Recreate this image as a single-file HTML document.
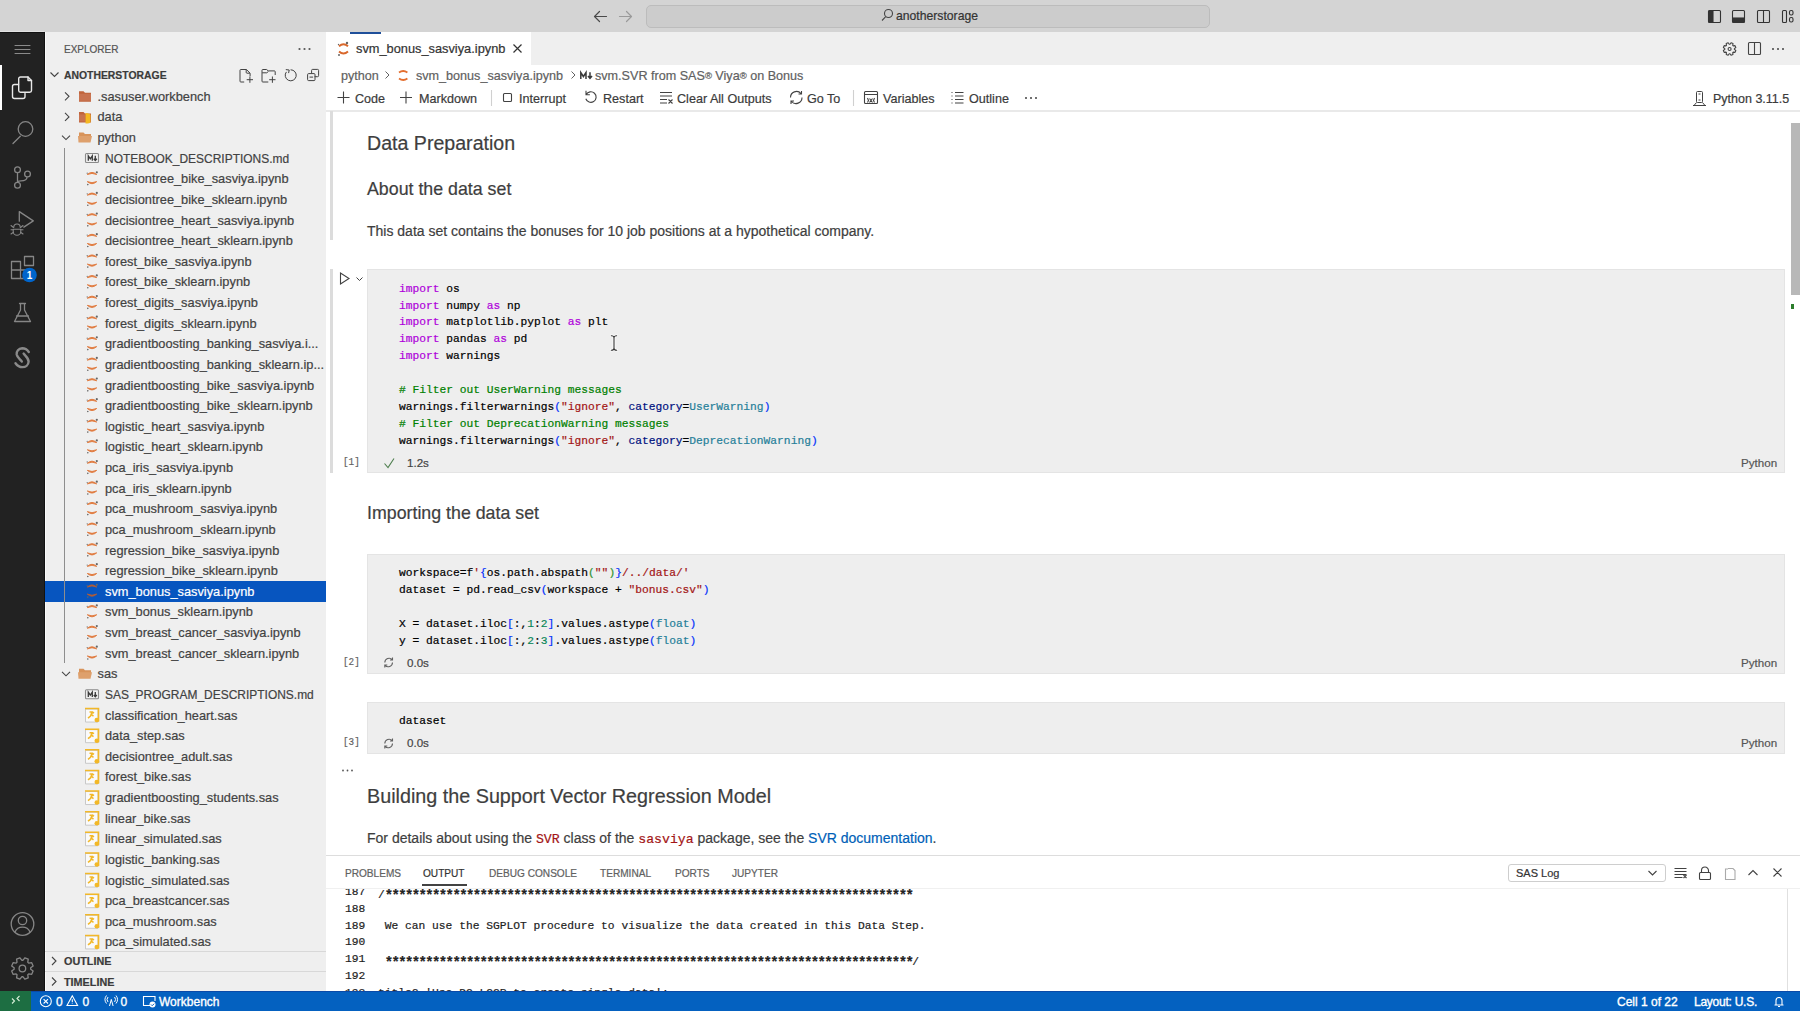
<!DOCTYPE html><html><head><meta charset="utf-8"><style>
*{margin:0;padding:0;box-sizing:border-box}
html,body{width:1800px;height:1011px;overflow:hidden;background:#fff}
body{position:relative;font-family:"Liberation Sans",sans-serif;color:#3b3b3b}
.t{-webkit-text-stroke:0.2px currentColor}
.a{position:absolute}
.t{position:absolute;white-space:pre;line-height:1}
svg{position:absolute;overflow:visible}
.mono{font-family:"Liberation Mono",monospace}
.ast{font-size:14px;letter-spacing:-1.64px;font-weight:bold;position:relative;top:2px}
</style></head><body><div class="a" style="left:0;top:0;width:1800px;height:32px;background:#d4d4d4"></div>
<svg style="left:0;top:0" width="1800" height="32"><g fill="none" stroke-linecap="round" stroke-linejoin="round"><path d="M594.5 16.5h12M599.5 11.5l-5 5 5 5" stroke="#4a4a4a" stroke-width="1.2"/><path d="M619.5 16.5h12M626.5 11.5l5 5-5 5" stroke="#9a9a9a" stroke-width="1.2"/></g></svg>
<div class="a" style="left:645.5px;top:4.5px;width:564px;height:23px;border:1px solid #bcbcbc;border-radius:5px;background:#cccccc"></div>
<svg style="left:0;top:0" width="1800" height="32"><g fill="none" stroke="#444" stroke-width="1.1"><circle cx="888.5" cy="13.5" r="4"/><path d="M885.5 16.8l-3.5 3.7"/></g></svg>
<div class="t" style="left:896px;top:10px;font-size:12.2px;color:#333">anotherstorage</div>
<svg style="left:0;top:0" width="1800" height="32"><g fill="none" stroke="#333" stroke-width="1.1"><rect x="1708.5" y="10.5" width="12" height="12" rx="1"/><rect x="1709" y="11" width="4" height="11" fill="#333"/><rect x="1732.5" y="10.5" width="12" height="12" rx="1"/><rect x="1733" y="18" width="11" height="4" fill="#333"/><rect x="1757.5" y="10.5" width="12" height="12" rx="1"/><path d="M1763.5 10.5v12"/><rect x="1782.5" y="10.5" width="4" height="12" rx="1"/><rect x="1789.5" y="10.5" width="3.5" height="4.5" rx="1.5"/><rect x="1789.5" y="17.5" width="3.5" height="4.5" rx="1.5"/></g></svg>
<div class="a" style="left:0;top:31px;width:44px;height:1px;background:#e2e2e2"></div>
<div class="a" style="left:0;top:32px;width:45px;height:959px;background:#222222;border-right:1.5px solid #121212;border-top:1px solid #111"></div>
<div class="a" style="left:0;top:65px;width:2px;height:45px;background:#ffffff"></div>
<svg style="left:0;top:0" width="45" height="1011"><g fill="none" stroke="#868686" stroke-width="1.3" stroke-linejoin="round" stroke-linecap="round"><path d="M15 45.5h15M15 49.5h15M15 53.5h15" stroke="#8a8a8a" stroke-width="1.1"/><g stroke="#e8e8e8" stroke-width="1.4"><path d="M18.5 84.5h-4a2 2 0 0 0-2 2v10a2 2 0 0 0 2 2h8.5a2 2 0 0 0 2-2v-3"/><path d="M20.5 77h7.5l3.5 3.5v10a1.8 1.8 0 0 1-1.8 1.8h-9.2a1.8 1.8 0 0 1-1.8-1.8v-11.7a1.8 1.8 0 0 1 1.8-1.8z"/><path d="M28 77v3.5h3.5"/></g><circle cx="25.5" cy="129" r="7.3"/><path d="M13 143.5l7.3-7.3"/><circle cx="17.5" cy="169.8" r="2.9"/><circle cx="27.5" cy="174" r="2.9"/><circle cx="17.5" cy="185.3" r="2.9"/><path d="M17.5 173v9.2M27 177.3c0 3-3 3.5-6 3.5-2 0-3.5.8-3.5 1.5"/><path d="M19.3 221.2v-9.6l14 9.3-9.5 6.2"/><path d="M13.8 227.2a3.2 3.2 0 0 1 6.4 0M13.2 229.3h7.6v2.2a3.8 3.8 0 0 1-7.6 0z" stroke-width="1.1"/><path d="M11 225.5l2.5 2M23 225.5l-2.5 2M11 229.8h2.2M23 229.8h-2.2M11 234l2.5-1.8M23 234l-2.5-1.8" stroke-width="1.1"/><path d="M11.5 261.5h9v17h-9zM11.5 270h17.5v8.5h-8.5M24.5 256.5h9v9h-9z"/><path d="M19.5 303.5h6M20.5 303.5v6.5l-6 11.5h16l-6-11.5v-6.5M16.5 316h12"/><circle cx="22.5" cy="924" r="11.3"/><circle cx="22.5" cy="920.5" r="4.2"/><path d="M15 932c1.5-3.5 4.3-4.8 7.5-4.8s6 1.3 7.5 4.8"/></g><circle cx="29.5" cy="275" r="7.3" fill="#0065cc"/><text x="29.5" y="279" font-family="Liberation Sans" font-size="10" font-weight="bold" fill="#fff" text-anchor="middle">1</text><path d="M28.8 352C27 349.3 24.5 348.3 22.2 348.3 18.5 348.5 16.3 351.3 16.7 354.5 17.2 357.5 20 359.3 21.8 361.5" fill="none" stroke="#8a8a8a" stroke-width="2.4" stroke-linecap="round"/><path d="M23.6 353.6C25.6 356.2 28.6 358 28.6 361.7 28.4 365.2 25.4 367.1 22.5 367.1 19.6 367.1 17.2 365.6 15.5 363.2" fill="none" stroke="#8a8a8a" stroke-width="2.4" stroke-linecap="round"/><g fill="none" stroke="#868686" stroke-width="1.3" stroke-linejoin="round"><circle cx="22.4" cy="968.5" r="3.3"/><path d="M30.67 969.15 L33.12 970.98 L31.73 974.32 L28.71 973.89 L27.79 974.81 L28.22 977.83 L24.88 979.22 L23.05 976.77 L21.75 976.77 L19.92 979.22 L16.58 977.83 L17.01 974.81 L16.09 973.89 L13.07 974.32 L11.68 970.98 L14.13 969.15 L14.13 967.85 L11.68 966.02 L13.07 962.68 L16.09 963.11 L17.01 962.19 L16.58 959.17 L19.92 957.78 L21.75 960.23 L23.05 960.23 L24.88 957.78 L28.22 959.17 L27.79 962.19 L28.71 963.11 L31.73 962.68 L33.12 966.02 L30.67 967.85Z"/></g></svg>
<div class="a" style="left:45px;top:32px;width:281px;height:959px;background:#efefef;border-left:1px solid #fafafa"></div>
<div class="t" style="left:64px;top:44.5px;font-size:10px;color:#555">EXPLORER</div>
<svg style="left:0;top:0" width="330" height="1011"><g fill="#555"><circle cx="299.5" cy="49" r="1.1"/><circle cx="304.5" cy="49" r="1.1"/><circle cx="309.5" cy="49" r="1.1"/></g></svg>
<svg style="left:0;top:0" width="330" height="1011"><path d="M50.5 72.5l4 4 4-4" fill="none" stroke="#444" stroke-width="1.1"/></svg>
<div class="t" style="left:64px;top:71px;font-size:10.4px;font-weight:bold;color:#3b3b3b">ANOTHERSTORAGE</div>
<svg style="left:0;top:0" width="330" height="1011"><g fill="none" stroke="#424242" stroke-width="1"><path d="M244.2 82h-3.4a.8.8 0 0 1-.8-.8V70.3a.8.8 0 0 1 .8-.8h5.6l3.7 3.7v3"/><path d="M246.2 69.6v2.8a.8.8 0 0 0 .8.8h2.9"/><path d="M249.9 76.5v6.3M246.7 79.7h6.3"/><path d="M268.3 82h-5.5a.8.8 0 0 1-.8-.8V70.3a.8.8 0 0 1 .8-.8h3.8l1.6 1.4h6.2a.8.8 0 0 1 .8.8v3.3"/><path d="M262.2 72.8h4.6l1.5-1.3"/><path d="M272.4 76.5v6.3M269.2 79.7h6.3"/><path d="M290.6 69.8A5.5 5.5 0 1 1 286.4 71.9"/><path d="M285.8 69.6l3.4.4-.6 3.1"/><path d="M311.6 73.3v-2.9a1 1 0 0 1 1-1h5a1 1 0 0 1 1 1v5.3a1 1 0 0 1-1 1h-3"/><rect x="307.6" y="73.6" width="7.4" height="7" rx="1"/><path d="M309.5 77.1h3.6"/></g></svg>
<div class="t" style="left:97.5px;top:90.812px;font-size:12.8px;color:#424242">.sasuser.workbench</div>
<div class="t" style="left:97.5px;top:111.438px;font-size:12.8px;color:#424242">data</div>
<div class="t" style="left:97.5px;top:132.062px;font-size:12.8px;color:#424242">python</div>
<div class="t" style="left:105px;top:152.688px;font-size:12.8px;color:#424242;transform:scaleX(0.935);transform-origin:0 0">NOTEBOOK_DESCRIPTIONS.md</div>
<div class="t" style="left:105px;top:173.312px;font-size:12.8px;color:#424242">decisiontree_bike_sasviya.ipynb</div>
<div class="t" style="left:105px;top:193.938px;font-size:12.8px;color:#424242">decisiontree_bike_sklearn.ipynb</div>
<div class="t" style="left:105px;top:214.562px;font-size:12.8px;color:#424242">decisiontree_heart_sasviya.ipynb</div>
<div class="t" style="left:105px;top:235.188px;font-size:12.8px;color:#424242">decisiontree_heart_sklearn.ipynb</div>
<div class="t" style="left:105px;top:255.812px;font-size:12.8px;color:#424242">forest_bike_sasviya.ipynb</div>
<div class="t" style="left:105px;top:276.438px;font-size:12.8px;color:#424242">forest_bike_sklearn.ipynb</div>
<div class="t" style="left:105px;top:297.062px;font-size:12.8px;color:#424242">forest_digits_sasviya.ipynb</div>
<div class="t" style="left:105px;top:317.688px;font-size:12.8px;color:#424242">forest_digits_sklearn.ipynb</div>
<div class="t" style="left:105px;top:338.312px;font-size:12.8px;color:#424242">gradientboosting_banking_sasviya.i...</div>
<div class="t" style="left:105px;top:358.938px;font-size:12.8px;color:#424242">gradientboosting_banking_sklearn.ip...</div>
<div class="t" style="left:105px;top:379.562px;font-size:12.8px;color:#424242">gradientboosting_bike_sasviya.ipynb</div>
<div class="t" style="left:105px;top:400.188px;font-size:12.8px;color:#424242">gradientboosting_bike_sklearn.ipynb</div>
<div class="t" style="left:105px;top:420.812px;font-size:12.8px;color:#424242">logistic_heart_sasviya.ipynb</div>
<div class="t" style="left:105px;top:441.438px;font-size:12.8px;color:#424242">logistic_heart_sklearn.ipynb</div>
<div class="t" style="left:105px;top:462.062px;font-size:12.8px;color:#424242">pca_iris_sasviya.ipynb</div>
<div class="t" style="left:105px;top:482.688px;font-size:12.8px;color:#424242">pca_iris_sklearn.ipynb</div>
<div class="t" style="left:105px;top:503.312px;font-size:12.8px;color:#424242">pca_mushroom_sasviya.ipynb</div>
<div class="t" style="left:105px;top:523.938px;font-size:12.8px;color:#424242">pca_mushroom_sklearn.ipynb</div>
<div class="t" style="left:105px;top:544.562px;font-size:12.8px;color:#424242">regression_bike_sasviya.ipynb</div>
<div class="t" style="left:105px;top:565.188px;font-size:12.8px;color:#424242">regression_bike_sklearn.ipynb</div>
<div class="a" style="left:45px;top:581.000px;width:281px;height:20.625px;background:#0755bf"></div>
<div class="t" style="left:105px;top:585.812px;font-size:12.8px;color:#ffffff">svm_bonus_sasviya.ipynb</div>
<div class="t" style="left:105px;top:606.438px;font-size:12.8px;color:#424242">svm_bonus_sklearn.ipynb</div>
<div class="t" style="left:105px;top:627.062px;font-size:12.8px;color:#424242">svm_breast_cancer_sasviya.ipynb</div>
<div class="t" style="left:105px;top:647.688px;font-size:12.8px;color:#424242">svm_breast_cancer_sklearn.ipynb</div>
<div class="t" style="left:97.5px;top:668.312px;font-size:12.8px;color:#424242">sas</div>
<div class="t" style="left:105px;top:688.938px;font-size:12.8px;color:#424242;transform:scaleX(0.935);transform-origin:0 0">SAS_PROGRAM_DESCRIPTIONS.md</div>
<div class="t" style="left:105px;top:709.562px;font-size:12.8px;color:#424242">classification_heart.sas</div>
<div class="t" style="left:105px;top:730.188px;font-size:12.8px;color:#424242">data_step.sas</div>
<div class="t" style="left:105px;top:750.812px;font-size:12.8px;color:#424242">decisiontree_adult.sas</div>
<div class="t" style="left:105px;top:771.438px;font-size:12.8px;color:#424242">forest_bike.sas</div>
<div class="t" style="left:105px;top:792.062px;font-size:12.8px;color:#424242">gradientboosting_students.sas</div>
<div class="t" style="left:105px;top:812.688px;font-size:12.8px;color:#424242">linear_bike.sas</div>
<div class="t" style="left:105px;top:833.312px;font-size:12.8px;color:#424242">linear_simulated.sas</div>
<div class="t" style="left:105px;top:853.938px;font-size:12.8px;color:#424242">logistic_banking.sas</div>
<div class="t" style="left:105px;top:874.562px;font-size:12.8px;color:#424242">logistic_simulated.sas</div>
<div class="t" style="left:105px;top:895.188px;font-size:12.8px;color:#424242">pca_breastcancer.sas</div>
<div class="t" style="left:105px;top:915.812px;font-size:12.8px;color:#424242">pca_mushroom.sas</div>
<div class="t" style="left:105px;top:936.438px;font-size:12.8px;color:#424242">pca_simulated.sas</div>
<div class="a" style="left:64px;top:148px;width:1px;height:515px;background:#8e8e8e"></div>
<svg style="left:0;top:0" width="330" height="1011"><path d="M65 92.31l4 4-4 4" fill="none" stroke="#444" stroke-width="1.1"/><path d="M79 91.31h4.5l1.5 1.5h6v9h-12z" fill="#c0643c"/><path d="M79 93.81h12v7h-12z" fill="#c87350"/><path d="M65 112.94l4 4-4 4" fill="none" stroke="#444" stroke-width="1.1"/><path d="M79 111.94h4.5l1.5 1.5h6v9h-12z" fill="#c0643c"/><path d="M85.5 112.94c3 0 5 1 5 2v7c0 1-2 1.5-5 1.5z" fill="#f4b822"/><path d="M79 114.44h6v7h-6z" fill="#c87350"/><path d="M62 135.56l4 4 4-4" fill="none" stroke="#444" stroke-width="1.1"/><path d="M79 132.56h4.5l1.5 1.5h6v3h-12z" fill="#d8935a"/><path d="M78 136.06h14l-1.5 6.5h-12z" fill="#dea06c"/><rect x="85.5" y="153.49" width="13" height="9" rx="1" fill="none" stroke="#8a8a8a" stroke-width="1.1"/><path d="M88.3 160.79v-5l2 3 2-3v5M95.3 155.69v4.5M93.8 158.79l1.5 1.8 1.5-1.8" fill="none" stroke="#3a3a3a" stroke-width="1.3"/><path d="M87.3 174.51q4.7 -4.2 9.4 0q-4.7 -2.2 -9.4 0z" fill="#e0773a" stroke="#e0773a" stroke-width=".9"/><path d="M87.3 181.61q4.7 4.2 9.4 0q-4.7 2.2 -9.4 0z" fill="#e0773a" stroke="#e0773a" stroke-width=".9"/><circle cx="96.8" cy="172.31" r="1.1" fill="#666"/><circle cx="87.2" cy="173.21" r=".6" fill="#666"/><circle cx="87.8" cy="184.61" r=".8" fill="#666"/><path d="M87.3 195.14q4.7 -4.2 9.4 0q-4.7 -2.2 -9.4 0z" fill="#e0773a" stroke="#e0773a" stroke-width=".9"/><path d="M87.3 202.24q4.7 4.2 9.4 0q-4.7 2.2 -9.4 0z" fill="#e0773a" stroke="#e0773a" stroke-width=".9"/><circle cx="96.8" cy="192.94" r="1.1" fill="#666"/><circle cx="87.2" cy="193.84" r=".6" fill="#666"/><circle cx="87.8" cy="205.24" r=".8" fill="#666"/><path d="M87.3 215.76q4.7 -4.2 9.4 0q-4.7 -2.2 -9.4 0z" fill="#e0773a" stroke="#e0773a" stroke-width=".9"/><path d="M87.3 222.86q4.7 4.2 9.4 0q-4.7 2.2 -9.4 0z" fill="#e0773a" stroke="#e0773a" stroke-width=".9"/><circle cx="96.8" cy="213.56" r="1.1" fill="#666"/><circle cx="87.2" cy="214.46" r=".6" fill="#666"/><circle cx="87.8" cy="225.86" r=".8" fill="#666"/><path d="M87.3 236.39q4.7 -4.2 9.4 0q-4.7 -2.2 -9.4 0z" fill="#e0773a" stroke="#e0773a" stroke-width=".9"/><path d="M87.3 243.49q4.7 4.2 9.4 0q-4.7 2.2 -9.4 0z" fill="#e0773a" stroke="#e0773a" stroke-width=".9"/><circle cx="96.8" cy="234.19" r="1.1" fill="#666"/><circle cx="87.2" cy="235.09" r=".6" fill="#666"/><circle cx="87.8" cy="246.49" r=".8" fill="#666"/><path d="M87.3 257.01q4.7 -4.2 9.4 0q-4.7 -2.2 -9.4 0z" fill="#e0773a" stroke="#e0773a" stroke-width=".9"/><path d="M87.3 264.11q4.7 4.2 9.4 0q-4.7 2.2 -9.4 0z" fill="#e0773a" stroke="#e0773a" stroke-width=".9"/><circle cx="96.8" cy="254.81" r="1.1" fill="#666"/><circle cx="87.2" cy="255.71" r=".6" fill="#666"/><circle cx="87.8" cy="267.11" r=".8" fill="#666"/><path d="M87.3 277.64q4.7 -4.2 9.4 0q-4.7 -2.2 -9.4 0z" fill="#e0773a" stroke="#e0773a" stroke-width=".9"/><path d="M87.3 284.74q4.7 4.2 9.4 0q-4.7 2.2 -9.4 0z" fill="#e0773a" stroke="#e0773a" stroke-width=".9"/><circle cx="96.8" cy="275.44" r="1.1" fill="#666"/><circle cx="87.2" cy="276.34" r=".6" fill="#666"/><circle cx="87.8" cy="287.74" r=".8" fill="#666"/><path d="M87.3 298.26q4.7 -4.2 9.4 0q-4.7 -2.2 -9.4 0z" fill="#e0773a" stroke="#e0773a" stroke-width=".9"/><path d="M87.3 305.36q4.7 4.2 9.4 0q-4.7 2.2 -9.4 0z" fill="#e0773a" stroke="#e0773a" stroke-width=".9"/><circle cx="96.8" cy="296.06" r="1.1" fill="#666"/><circle cx="87.2" cy="296.96" r=".6" fill="#666"/><circle cx="87.8" cy="308.36" r=".8" fill="#666"/><path d="M87.3 318.89q4.7 -4.2 9.4 0q-4.7 -2.2 -9.4 0z" fill="#e0773a" stroke="#e0773a" stroke-width=".9"/><path d="M87.3 325.99q4.7 4.2 9.4 0q-4.7 2.2 -9.4 0z" fill="#e0773a" stroke="#e0773a" stroke-width=".9"/><circle cx="96.8" cy="316.69" r="1.1" fill="#666"/><circle cx="87.2" cy="317.59" r=".6" fill="#666"/><circle cx="87.8" cy="328.99" r=".8" fill="#666"/><path d="M87.3 339.51q4.7 -4.2 9.4 0q-4.7 -2.2 -9.4 0z" fill="#e0773a" stroke="#e0773a" stroke-width=".9"/><path d="M87.3 346.61q4.7 4.2 9.4 0q-4.7 2.2 -9.4 0z" fill="#e0773a" stroke="#e0773a" stroke-width=".9"/><circle cx="96.8" cy="337.31" r="1.1" fill="#666"/><circle cx="87.2" cy="338.21" r=".6" fill="#666"/><circle cx="87.8" cy="349.61" r=".8" fill="#666"/><path d="M87.3 360.14q4.7 -4.2 9.4 0q-4.7 -2.2 -9.4 0z" fill="#e0773a" stroke="#e0773a" stroke-width=".9"/><path d="M87.3 367.24q4.7 4.2 9.4 0q-4.7 2.2 -9.4 0z" fill="#e0773a" stroke="#e0773a" stroke-width=".9"/><circle cx="96.8" cy="357.94" r="1.1" fill="#666"/><circle cx="87.2" cy="358.84" r=".6" fill="#666"/><circle cx="87.8" cy="370.24" r=".8" fill="#666"/><path d="M87.3 380.76q4.7 -4.2 9.4 0q-4.7 -2.2 -9.4 0z" fill="#e0773a" stroke="#e0773a" stroke-width=".9"/><path d="M87.3 387.86q4.7 4.2 9.4 0q-4.7 2.2 -9.4 0z" fill="#e0773a" stroke="#e0773a" stroke-width=".9"/><circle cx="96.8" cy="378.56" r="1.1" fill="#666"/><circle cx="87.2" cy="379.46" r=".6" fill="#666"/><circle cx="87.8" cy="390.86" r=".8" fill="#666"/><path d="M87.3 401.39q4.7 -4.2 9.4 0q-4.7 -2.2 -9.4 0z" fill="#e0773a" stroke="#e0773a" stroke-width=".9"/><path d="M87.3 408.49q4.7 4.2 9.4 0q-4.7 2.2 -9.4 0z" fill="#e0773a" stroke="#e0773a" stroke-width=".9"/><circle cx="96.8" cy="399.19" r="1.1" fill="#666"/><circle cx="87.2" cy="400.09" r=".6" fill="#666"/><circle cx="87.8" cy="411.49" r=".8" fill="#666"/><path d="M87.3 422.01q4.7 -4.2 9.4 0q-4.7 -2.2 -9.4 0z" fill="#e0773a" stroke="#e0773a" stroke-width=".9"/><path d="M87.3 429.11q4.7 4.2 9.4 0q-4.7 2.2 -9.4 0z" fill="#e0773a" stroke="#e0773a" stroke-width=".9"/><circle cx="96.8" cy="419.81" r="1.1" fill="#666"/><circle cx="87.2" cy="420.71" r=".6" fill="#666"/><circle cx="87.8" cy="432.11" r=".8" fill="#666"/><path d="M87.3 442.64q4.7 -4.2 9.4 0q-4.7 -2.2 -9.4 0z" fill="#e0773a" stroke="#e0773a" stroke-width=".9"/><path d="M87.3 449.74q4.7 4.2 9.4 0q-4.7 2.2 -9.4 0z" fill="#e0773a" stroke="#e0773a" stroke-width=".9"/><circle cx="96.8" cy="440.44" r="1.1" fill="#666"/><circle cx="87.2" cy="441.34" r=".6" fill="#666"/><circle cx="87.8" cy="452.74" r=".8" fill="#666"/><path d="M87.3 463.26q4.7 -4.2 9.4 0q-4.7 -2.2 -9.4 0z" fill="#e0773a" stroke="#e0773a" stroke-width=".9"/><path d="M87.3 470.36q4.7 4.2 9.4 0q-4.7 2.2 -9.4 0z" fill="#e0773a" stroke="#e0773a" stroke-width=".9"/><circle cx="96.8" cy="461.06" r="1.1" fill="#666"/><circle cx="87.2" cy="461.96" r=".6" fill="#666"/><circle cx="87.8" cy="473.36" r=".8" fill="#666"/><path d="M87.3 483.89q4.7 -4.2 9.4 0q-4.7 -2.2 -9.4 0z" fill="#e0773a" stroke="#e0773a" stroke-width=".9"/><path d="M87.3 490.99q4.7 4.2 9.4 0q-4.7 2.2 -9.4 0z" fill="#e0773a" stroke="#e0773a" stroke-width=".9"/><circle cx="96.8" cy="481.69" r="1.1" fill="#666"/><circle cx="87.2" cy="482.59" r=".6" fill="#666"/><circle cx="87.8" cy="493.99" r=".8" fill="#666"/><path d="M87.3 504.51q4.7 -4.2 9.4 0q-4.7 -2.2 -9.4 0z" fill="#e0773a" stroke="#e0773a" stroke-width=".9"/><path d="M87.3 511.61q4.7 4.2 9.4 0q-4.7 2.2 -9.4 0z" fill="#e0773a" stroke="#e0773a" stroke-width=".9"/><circle cx="96.8" cy="502.31" r="1.1" fill="#666"/><circle cx="87.2" cy="503.21" r=".6" fill="#666"/><circle cx="87.8" cy="514.61" r=".8" fill="#666"/><path d="M87.3 525.14q4.7 -4.2 9.4 0q-4.7 -2.2 -9.4 0z" fill="#e0773a" stroke="#e0773a" stroke-width=".9"/><path d="M87.3 532.24q4.7 4.2 9.4 0q-4.7 2.2 -9.4 0z" fill="#e0773a" stroke="#e0773a" stroke-width=".9"/><circle cx="96.8" cy="522.94" r="1.1" fill="#666"/><circle cx="87.2" cy="523.84" r=".6" fill="#666"/><circle cx="87.8" cy="535.24" r=".8" fill="#666"/><path d="M87.3 545.76q4.7 -4.2 9.4 0q-4.7 -2.2 -9.4 0z" fill="#e0773a" stroke="#e0773a" stroke-width=".9"/><path d="M87.3 552.86q4.7 4.2 9.4 0q-4.7 2.2 -9.4 0z" fill="#e0773a" stroke="#e0773a" stroke-width=".9"/><circle cx="96.8" cy="543.56" r="1.1" fill="#666"/><circle cx="87.2" cy="544.46" r=".6" fill="#666"/><circle cx="87.8" cy="555.86" r=".8" fill="#666"/><path d="M87.3 566.39q4.7 -4.2 9.4 0q-4.7 -2.2 -9.4 0z" fill="#e0773a" stroke="#e0773a" stroke-width=".9"/><path d="M87.3 573.49q4.7 4.2 9.4 0q-4.7 2.2 -9.4 0z" fill="#e0773a" stroke="#e0773a" stroke-width=".9"/><circle cx="96.8" cy="564.19" r="1.1" fill="#666"/><circle cx="87.2" cy="565.09" r=".6" fill="#666"/><circle cx="87.8" cy="576.49" r=".8" fill="#666"/><path d="M87.3 587.01q4.7 -4.2 9.4 0q-4.7 -2.2 -9.4 0z" fill="#b85c30" stroke="#b85c30" stroke-width=".9"/><path d="M87.3 594.11q4.7 4.2 9.4 0q-4.7 2.2 -9.4 0z" fill="#b85c30" stroke="#b85c30" stroke-width=".9"/><circle cx="96.8" cy="584.81" r="1.1" fill="#666"/><circle cx="87.2" cy="585.71" r=".6" fill="#666"/><circle cx="87.8" cy="597.11" r=".8" fill="#666"/><path d="M87.3 607.64q4.7 -4.2 9.4 0q-4.7 -2.2 -9.4 0z" fill="#e0773a" stroke="#e0773a" stroke-width=".9"/><path d="M87.3 614.74q4.7 4.2 9.4 0q-4.7 2.2 -9.4 0z" fill="#e0773a" stroke="#e0773a" stroke-width=".9"/><circle cx="96.8" cy="605.44" r="1.1" fill="#666"/><circle cx="87.2" cy="606.34" r=".6" fill="#666"/><circle cx="87.8" cy="617.74" r=".8" fill="#666"/><path d="M87.3 628.26q4.7 -4.2 9.4 0q-4.7 -2.2 -9.4 0z" fill="#e0773a" stroke="#e0773a" stroke-width=".9"/><path d="M87.3 635.36q4.7 4.2 9.4 0q-4.7 2.2 -9.4 0z" fill="#e0773a" stroke="#e0773a" stroke-width=".9"/><circle cx="96.8" cy="626.06" r="1.1" fill="#666"/><circle cx="87.2" cy="626.96" r=".6" fill="#666"/><circle cx="87.8" cy="638.36" r=".8" fill="#666"/><path d="M87.3 648.89q4.7 -4.2 9.4 0q-4.7 -2.2 -9.4 0z" fill="#e0773a" stroke="#e0773a" stroke-width=".9"/><path d="M87.3 655.99q4.7 4.2 9.4 0q-4.7 2.2 -9.4 0z" fill="#e0773a" stroke="#e0773a" stroke-width=".9"/><circle cx="96.8" cy="646.69" r="1.1" fill="#666"/><circle cx="87.2" cy="647.59" r=".6" fill="#666"/><circle cx="87.8" cy="658.99" r=".8" fill="#666"/><path d="M62 671.81l4 4 4-4" fill="none" stroke="#444" stroke-width="1.1"/><path d="M79 668.81h4.5l1.5 1.5h6v3h-12z" fill="#d8935a"/><path d="M78 672.31h14l-1.5 6.5h-12z" fill="#dea06c"/><rect x="85.5" y="689.74" width="13" height="9" rx="1" fill="none" stroke="#8a8a8a" stroke-width="1.1"/><path d="M88.3 697.04v-5l2 3 2-3v5M95.3 691.94v4.5M93.8 695.04l1.5 1.8 1.5-1.8" fill="none" stroke="#3a3a3a" stroke-width="1.3"/><path d="M85.5 709.06h12.5v13h-12.5z" fill="#fafafa" stroke="#c8c8c8" stroke-width="1"/><path d="M85 708.56h13.5v13" fill="none" stroke="#f2b828" stroke-width="1.6"/><path d="M88 718.06l2.5-2 1-2.5 2-1.5M89.5 712.06h3l1.5 1M91.5 714.56l2 1.5" fill="none" stroke="#f2b828" stroke-width="1.5"/><circle cx="96.8" cy="720.06" r="2.3" fill="#f2b828"/><path d="M85.5 729.69h12.5v13h-12.5z" fill="#fafafa" stroke="#c8c8c8" stroke-width="1"/><path d="M85 729.19h13.5v13" fill="none" stroke="#f2b828" stroke-width="1.6"/><path d="M88 738.69l2.5-2 1-2.5 2-1.5M89.5 732.69h3l1.5 1M91.5 735.19l2 1.5" fill="none" stroke="#f2b828" stroke-width="1.5"/><circle cx="96.8" cy="740.69" r="2.3" fill="#f2b828"/><path d="M85.5 750.31h12.5v13h-12.5z" fill="#fafafa" stroke="#c8c8c8" stroke-width="1"/><path d="M85 749.81h13.5v13" fill="none" stroke="#f2b828" stroke-width="1.6"/><path d="M88 759.31l2.5-2 1-2.5 2-1.5M89.5 753.31h3l1.5 1M91.5 755.81l2 1.5" fill="none" stroke="#f2b828" stroke-width="1.5"/><circle cx="96.8" cy="761.31" r="2.3" fill="#f2b828"/><path d="M85.5 770.94h12.5v13h-12.5z" fill="#fafafa" stroke="#c8c8c8" stroke-width="1"/><path d="M85 770.44h13.5v13" fill="none" stroke="#f2b828" stroke-width="1.6"/><path d="M88 779.94l2.5-2 1-2.5 2-1.5M89.5 773.94h3l1.5 1M91.5 776.44l2 1.5" fill="none" stroke="#f2b828" stroke-width="1.5"/><circle cx="96.8" cy="781.94" r="2.3" fill="#f2b828"/><path d="M85.5 791.56h12.5v13h-12.5z" fill="#fafafa" stroke="#c8c8c8" stroke-width="1"/><path d="M85 791.06h13.5v13" fill="none" stroke="#f2b828" stroke-width="1.6"/><path d="M88 800.56l2.5-2 1-2.5 2-1.5M89.5 794.56h3l1.5 1M91.5 797.06l2 1.5" fill="none" stroke="#f2b828" stroke-width="1.5"/><circle cx="96.8" cy="802.56" r="2.3" fill="#f2b828"/><path d="M85.5 812.19h12.5v13h-12.5z" fill="#fafafa" stroke="#c8c8c8" stroke-width="1"/><path d="M85 811.69h13.5v13" fill="none" stroke="#f2b828" stroke-width="1.6"/><path d="M88 821.19l2.5-2 1-2.5 2-1.5M89.5 815.19h3l1.5 1M91.5 817.69l2 1.5" fill="none" stroke="#f2b828" stroke-width="1.5"/><circle cx="96.8" cy="823.19" r="2.3" fill="#f2b828"/><path d="M85.5 832.81h12.5v13h-12.5z" fill="#fafafa" stroke="#c8c8c8" stroke-width="1"/><path d="M85 832.31h13.5v13" fill="none" stroke="#f2b828" stroke-width="1.6"/><path d="M88 841.81l2.5-2 1-2.5 2-1.5M89.5 835.81h3l1.5 1M91.5 838.31l2 1.5" fill="none" stroke="#f2b828" stroke-width="1.5"/><circle cx="96.8" cy="843.81" r="2.3" fill="#f2b828"/><path d="M85.5 853.44h12.5v13h-12.5z" fill="#fafafa" stroke="#c8c8c8" stroke-width="1"/><path d="M85 852.94h13.5v13" fill="none" stroke="#f2b828" stroke-width="1.6"/><path d="M88 862.44l2.5-2 1-2.5 2-1.5M89.5 856.44h3l1.5 1M91.5 858.94l2 1.5" fill="none" stroke="#f2b828" stroke-width="1.5"/><circle cx="96.8" cy="864.44" r="2.3" fill="#f2b828"/><path d="M85.5 874.06h12.5v13h-12.5z" fill="#fafafa" stroke="#c8c8c8" stroke-width="1"/><path d="M85 873.56h13.5v13" fill="none" stroke="#f2b828" stroke-width="1.6"/><path d="M88 883.06l2.5-2 1-2.5 2-1.5M89.5 877.06h3l1.5 1M91.5 879.56l2 1.5" fill="none" stroke="#f2b828" stroke-width="1.5"/><circle cx="96.8" cy="885.06" r="2.3" fill="#f2b828"/><path d="M85.5 894.69h12.5v13h-12.5z" fill="#fafafa" stroke="#c8c8c8" stroke-width="1"/><path d="M85 894.19h13.5v13" fill="none" stroke="#f2b828" stroke-width="1.6"/><path d="M88 903.69l2.5-2 1-2.5 2-1.5M89.5 897.69h3l1.5 1M91.5 900.19l2 1.5" fill="none" stroke="#f2b828" stroke-width="1.5"/><circle cx="96.8" cy="905.69" r="2.3" fill="#f2b828"/><path d="M85.5 915.31h12.5v13h-12.5z" fill="#fafafa" stroke="#c8c8c8" stroke-width="1"/><path d="M85 914.81h13.5v13" fill="none" stroke="#f2b828" stroke-width="1.6"/><path d="M88 924.31l2.5-2 1-2.5 2-1.5M89.5 918.31h3l1.5 1M91.5 920.81l2 1.5" fill="none" stroke="#f2b828" stroke-width="1.5"/><circle cx="96.8" cy="926.31" r="2.3" fill="#f2b828"/><path d="M85.5 935.94h12.5v13h-12.5z" fill="#fafafa" stroke="#c8c8c8" stroke-width="1"/><path d="M85 935.44h13.5v13" fill="none" stroke="#f2b828" stroke-width="1.6"/><path d="M88 944.94l2.5-2 1-2.5 2-1.5M89.5 938.94h3l1.5 1M91.5 941.44l2 1.5" fill="none" stroke="#f2b828" stroke-width="1.5"/><circle cx="96.8" cy="946.94" r="2.3" fill="#f2b828"/></svg>
<div class="a" style="left:45px;top:950.5px;width:281px;height:1px;background:#d8d8d8"></div>
<div class="a" style="left:45px;top:971px;width:281px;height:1px;background:#d8d8d8"></div>
<svg style="left:0;top:0" width="330" height="1011"><path d="M52 957l4 4-4 4M52 977.5l4 4-4 4" fill="none" stroke="#444" stroke-width="1.1"/></svg>
<div class="t" style="left:64px;top:956px;font-size:10.8px;font-weight:bold;color:#3b3b3b">OUTLINE</div>
<div class="t" style="left:64px;top:976.5px;font-size:10.8px;font-weight:bold;color:#3b3b3b">TIMELINE</div>
<div class="a" style="left:326px;top:32px;width:1474px;height:32.8px;background:#efefef"></div>
<div class="a" style="left:326px;top:32px;width:205px;height:32.8px;background:#ffffff"></div>
<div class="a" style="left:350px;top:32px;width:31px;height:2px;background:#1f4f9a"></div>
<div class="t" style="left:356px;top:42.5px;font-size:12.8px;color:#333">svm_bonus_sasviya.ipynb</div>
<svg style="left:0;top:0" width="1800" height="120"><path d="M339 46.3q4.5 -4 9 0" fill="none" stroke="#d9682c" stroke-width="1.9"/><path d="M339 51.5q4.5 4 9 0" fill="none" stroke="#d9682c" stroke-width="1.9"/><circle cx="347" cy="43" r="1.2" fill="#666"/><circle cx="338.5" cy="44.5" r=".7" fill="#666"/><circle cx="339" cy="55" r="1" fill="#666"/><path d="M513.5 44.5l8 8M521.5 44.5l-8 8" stroke="#333" stroke-width="1.2"/><g fill="none" stroke="#444" stroke-width="1.1" stroke-linejoin="round"><circle cx="1729.6" cy="49" r="1.5"/><path d="M1734.39 49.38 L1735.83 50.45 L1735.03 52.39 L1733.25 52.12 L1732.72 52.65 L1732.99 54.43 L1731.05 55.23 L1729.98 53.79 L1729.22 53.79 L1728.15 55.23 L1726.21 54.43 L1726.48 52.65 L1725.95 52.12 L1724.17 52.39 L1723.37 50.45 L1724.81 49.38 L1724.81 48.62 L1723.37 47.55 L1724.17 45.61 L1725.95 45.88 L1726.48 45.35 L1726.21 43.57 L1728.15 42.77 L1729.22 44.21 L1729.98 44.21 L1731.05 42.77 L1732.99 43.57 L1732.72 45.35 L1733.25 45.88 L1735.03 45.61 L1735.83 47.55 L1734.39 48.62Z"/><rect x="1748.5" y="42.5" width="12" height="12" rx="1"/><path d="M1754.5 42.5v12"/></g><g fill="#444"><circle cx="1773" cy="49" r="1"/><circle cx="1778" cy="49" r="1"/><circle cx="1783" cy="49" r="1"/></g></svg>
<div class="t" style="left:341px;top:70px;font-size:12.6px;color:#616161">python</div>
<div class="t" style="left:416px;top:70px;font-size:12.6px;color:#616161">svm_bonus_sasviya.ipynb</div>
<div class="t" style="left:595px;top:70px;font-size:12.6px;color:#616161">svm.SVR from SAS<span style="font-size:9.5px;position:relative;top:-1px">®</span> Viya<span style="font-size:9.5px;position:relative;top:-1px">®</span> on Bonus</div>
<svg style="left:0;top:0" width="1800" height="120"><g fill="none" stroke="#616161" stroke-width="1"><path d="M385.5 71.5l3.5 3.5-3.5 3.5M571.5 71.5l3.5 3.5-3.5 3.5"/></g><path d="M399 72.5q4.2 -3 8.4 0" fill="none" stroke="#e46e2e" stroke-width="1.8"/><path d="M399 78.5q4.2 3 8.4 0" fill="none" stroke="#e46e2e" stroke-width="1.8"/><path d="M580.8 79v-6.5l2.6 4 2.6-4v6.5M590 72.3v5.5M588 76l2 2.3 2-2.3" fill="none" stroke="#3a3a3a" stroke-width="1.5"/></svg>
<div class="t" style="left:355px;top:92.7px;font-size:12.6px;color:#3b3b3b">Code</div>
<div class="t" style="left:419px;top:92.7px;font-size:12.6px;color:#3b3b3b">Markdown</div>
<div class="t" style="left:519px;top:92.7px;font-size:12.6px;color:#3b3b3b">Interrupt</div>
<div class="t" style="left:603px;top:92.7px;font-size:12.6px;color:#3b3b3b">Restart</div>
<div class="t" style="left:677px;top:92.7px;font-size:12.6px;color:#3b3b3b">Clear All Outputs</div>
<div class="t" style="left:807px;top:92.7px;font-size:12.6px;color:#3b3b3b">Go To</div>
<div class="t" style="left:883px;top:92.7px;font-size:12.6px;color:#3b3b3b">Variables</div>
<div class="t" style="left:969px;top:92.7px;font-size:12.6px;color:#3b3b3b">Outline</div>
<svg style="left:0;top:0" width="1800" height="120"><g fill="none" stroke="#424242" stroke-width="1.1"><path d="M343.5 91.5v12M337.5 97.5h12M406 91.5v12M400 97.5h12"/><path d="M491.5 90v16M853.5 90v16" stroke="#d0d0d0"/><rect x="503.5" y="93.5" width="8" height="8" rx="1"/><path d="M586.2 94.5a5.3 5.3 0 1 1-.4 4.3M586 90.8v3.9h3.9"/><path d="M660 92.5h12M660 96h12M660 99.5h7M660 103h7M668.5 99.5l4 4M672.5 99.5l-4 4"/><path d="M790.5 97.5a6 6 0 0 1 10.5-4M802 97.5a6 6 0 0 1-10.5 4M801.5 91v3h-3M791 104v-3h3"/><rect x="864.5" y="91.5" width="13" height="12" rx="1"/><path d="M864.5 94.5h13M867.5 98l1 2.5-1 2M874.5 98l-1 2.5 1 2M869.5 98.5l3 4M872.5 98.5l-3 4"/><path d="M951.5 92.5h1M951.5 96h1M951.5 99.5h1M951.5 103h1M955 92.5h8.5M955 96h8.5M955 99.5h8.5M955 103h8.5"/></g><g fill="#424242"><circle cx="1026" cy="98" r="1"/><circle cx="1031" cy="98" r="1"/><circle cx="1036" cy="98" r="1"/></g><g fill="none" stroke="#424242" stroke-width="1"><rect x="1696.5" y="91.5" width="6" height="11" rx="1"/><path d="M1693 105.5h13M1694 105.5l2.5-3M1705 105.5l-2.5-3M1698.5 94h2M1698.5 100h2"/></g></svg>
<div class="t" style="left:1713px;top:92.5px;font-size:12.5px;color:#3b3b3b">Python 3.11.5</div>
<div class="a" style="left:326px;top:110.3px;width:1474px;height:2px;background:#e9e9e9"></div>
<div class="a" style="left:330px;top:110.5px;width:2.5px;height:129.5px;background:#dcdcdc"></div>
<div class="t" style="left:367px;top:134px;font-size:19.6px;color:#3e3e3e">Data Preparation</div>
<div class="t" style="left:367px;top:181px;font-size:17.8px;color:#3e3e3e">About the data set</div>
<div class="t" style="left:367px;top:223.7px;font-size:14px;color:#3e3e3e">This data set contains the bonuses for 10 job positions at a hypothetical company.</div>
<div class="a" style="left:330px;top:269px;width:2.5px;height:204px;background:#dcdcdc"></div>
<div class="a" style="left:367px;top:268.5px;width:1418px;height:204px;background:#eeeeee;border:1px solid #e4e4e4"></div>
<svg style="left:0;top:0" width="400" height="1011"><g fill="none" stroke="#424242" stroke-width="1.1"><path d="M340.5 273v11l8.5-5.5z"/><path d="M356.5 277.5l3 3 3-3" stroke-width="1"/></g><path d="M384.5 463.5l3.5 4 6-9" fill="none" stroke="#4f7f4f" stroke-width="1.1"/></svg>
<div class="t mono" style="left:399px;top:283.60px;font-size:11.25px;color:#000;-webkit-text-stroke:0.2px currentColor"><span style="color:#af00db">import</span><span style="color:#000000"> os</span></div>
<div class="t mono" style="left:399px;top:300.50px;font-size:11.25px;color:#000;-webkit-text-stroke:0.2px currentColor"><span style="color:#af00db">import</span><span style="color:#000000"> numpy </span><span style="color:#af00db">as</span><span style="color:#000000"> np</span></div>
<div class="t mono" style="left:399px;top:317.40px;font-size:11.25px;color:#000;-webkit-text-stroke:0.2px currentColor"><span style="color:#af00db">import</span><span style="color:#000000"> matplotlib.pyplot </span><span style="color:#af00db">as</span><span style="color:#000000"> plt</span></div>
<div class="t mono" style="left:399px;top:334.30px;font-size:11.25px;color:#000;-webkit-text-stroke:0.2px currentColor"><span style="color:#af00db">import</span><span style="color:#000000"> pandas </span><span style="color:#af00db">as</span><span style="color:#000000"> pd</span></div>
<div class="t mono" style="left:399px;top:351.20px;font-size:11.25px;color:#000;-webkit-text-stroke:0.2px currentColor"><span style="color:#af00db">import</span><span style="color:#000000"> warnings</span></div>
<div class="t mono" style="left:399px;top:385.00px;font-size:11.25px;color:#000;-webkit-text-stroke:0.2px currentColor"><span style="color:#008000"># Filter out UserWarning messages</span></div>
<div class="t mono" style="left:399px;top:401.90px;font-size:11.25px;color:#000;-webkit-text-stroke:0.2px currentColor"><span style="color:#000000">warnings.filterwarnings</span><span style="color:#0431fa">(</span><span style="color:#a31515">&quot;ignore&quot;</span><span style="color:#000000">, </span><span style="color:#001080">category</span><span style="color:#000000">=</span><span style="color:#267f99">UserWarning</span><span style="color:#0431fa">)</span></div>
<div class="t mono" style="left:399px;top:418.80px;font-size:11.25px;color:#000;-webkit-text-stroke:0.2px currentColor"><span style="color:#008000"># Filter out DeprecationWarning messages</span></div>
<div class="t mono" style="left:399px;top:435.70px;font-size:11.25px;color:#000;-webkit-text-stroke:0.2px currentColor"><span style="color:#000000">warnings.filterwarnings</span><span style="color:#0431fa">(</span><span style="color:#a31515">&quot;ignore&quot;</span><span style="color:#000000">, </span><span style="color:#001080">category</span><span style="color:#000000">=</span><span style="color:#267f99">DeprecationWarning</span><span style="color:#0431fa">)</span></div>
<div class="t mono" style="left:343px;top:456.5px;font-size:10.8px;color:#616161;transform:scaleX(0.86);transform-origin:0 0">[1]</div>
<div class="t" style="left:407px;top:456.5px;font-size:11.6px;color:#444">1.2s</div>
<div class="t" style="left:1741px;top:456.5px;font-size:11.6px;color:#555">Python</div>
<div class="t" style="left:367px;top:505px;font-size:17.8px;color:#3e3e3e">Importing the data set</div>
<div class="a" style="left:367px;top:553.5px;width:1418px;height:120px;background:#eeeeee;border:1px solid #e4e4e4"></div>
<div class="t mono" style="left:399px;top:568.00px;font-size:11.25px;color:#000;-webkit-text-stroke:0.2px currentColor"><span style="color:#000000">workspace=</span><span style="color:#000000">f</span><span style="color:#a31515">&#x27;</span><span style="color:#0431fa">{</span><span style="color:#000000">os.path.abspath</span><span style="color:#319331">(</span><span style="color:#a31515">&quot;&quot;</span><span style="color:#319331">)</span><span style="color:#0431fa">}</span><span style="color:#a31515">/../data/&#x27;</span></div>
<div class="t mono" style="left:399px;top:584.90px;font-size:11.25px;color:#000;-webkit-text-stroke:0.2px currentColor"><span style="color:#000000">dataset = pd.read_csv</span><span style="color:#0431fa">(</span><span style="color:#000000">workspace + </span><span style="color:#a31515">&quot;bonus.csv&quot;</span><span style="color:#0431fa">)</span></div>
<div class="t mono" style="left:399px;top:618.70px;font-size:11.25px;color:#000;-webkit-text-stroke:0.2px currentColor"><span style="color:#000000">X = dataset.iloc</span><span style="color:#0431fa">[</span><span style="color:#000000">:,</span><span style="color:#098658">1</span><span style="color:#000000">:</span><span style="color:#098658">2</span><span style="color:#0431fa">]</span><span style="color:#000000">.values.astype</span><span style="color:#0431fa">(</span><span style="color:#267f99">float</span><span style="color:#0431fa">)</span></div>
<div class="t mono" style="left:399px;top:635.60px;font-size:11.25px;color:#000;-webkit-text-stroke:0.2px currentColor"><span style="color:#000000">y = dataset.iloc</span><span style="color:#0431fa">[</span><span style="color:#000000">:,</span><span style="color:#098658">2</span><span style="color:#000000">:</span><span style="color:#098658">3</span><span style="color:#0431fa">]</span><span style="color:#000000">.values.astype</span><span style="color:#0431fa">(</span><span style="color:#267f99">float</span><span style="color:#0431fa">)</span></div>
<div class="t mono" style="left:343px;top:656.5px;font-size:10.8px;color:#616161;transform:scaleX(0.86);transform-origin:0 0">[2]</div>
<div class="t" style="left:407px;top:656.5px;font-size:11.6px;color:#444">0.0s</div>
<div class="t" style="left:1741px;top:656.5px;font-size:11.6px;color:#555">Python</div>
<div class="a" style="left:367px;top:701.5px;width:1418px;height:52px;background:#eeeeee;border:1px solid #e4e4e4"></div>
<div class="t mono" style="left:399px;top:716.00px;font-size:11.25px;color:#000;-webkit-text-stroke:0.2px currentColor"><span style="color:#000000">dataset</span></div>
<div class="t mono" style="left:343px;top:737px;font-size:10.8px;color:#616161;transform:scaleX(0.86);transform-origin:0 0">[3]</div>
<div class="t" style="left:407px;top:737px;font-size:11.6px;color:#444">0.0s</div>
<div class="t" style="left:1741px;top:737px;font-size:11.6px;color:#555">Python</div>
<svg style="left:0;top:0" width="400" height="1011"><g fill="none" stroke="#616161" stroke-width="1.1"><path d="M384.8 662.5a4.3 4.3 0 0 1 7.5-2.8M392.5 662.5a4.3 4.3 0 0 1-7.5 2.8M392.5 657.5v2.5h-2.5M384.8 667.5v-2.5h2.5"/><path d="M384.8 743.5a4.3 4.3 0 0 1 7.5-2.8M392.5 743.5a4.3 4.3 0 0 1-7.5 2.8M392.5 738.5v2.5h-2.5M384.8 748.5v-2.5h2.5"/></g></svg>
<svg style="left:0;top:0" width="400" height="1011"><g fill="#555"><circle cx="343" cy="770.5" r=".9"/><circle cx="347.5" cy="770.5" r=".9"/><circle cx="352" cy="770.5" r=".9"/></g></svg>
<div class="t" style="left:367px;top:787.3px;font-size:19.75px;color:#3e3e3e">Building the Support Vector Regression Model</div>
<div class="t" style="left:367px;top:830.7px;font-size:14px;color:#3e3e3e">For details about using the <span class="mono" style="color:#a31515;font-size:13.2px">SVR</span> class of the <span class="mono" style="color:#a31515;font-size:13.2px">sasviya</span> package, see the <span style="color:#005fb8">SVR documentation</span>.</div>
<div class="a" style="left:1791px;top:123px;width:9px;height:172px;background:#b8b8b8"></div>
<div class="a" style="left:1791px;top:303.5px;width:3px;height:5px;background:#2c7d2c"></div>
<div class="a" style="left:326px;top:855px;width:1474px;height:136px;background:#ffffff;border-top:1.5px solid #dddddd"></div>
<div class="t" style="left:345px;top:868.5px;font-size:10.1px;color:#616161">PROBLEMS</div>
<div class="t" style="left:423px;top:868.5px;font-size:10.1px;color:#333">OUTPUT</div>
<div class="t" style="left:489px;top:868.5px;font-size:10.1px;color:#616161">DEBUG CONSOLE</div>
<div class="t" style="left:600px;top:868.5px;font-size:10.1px;color:#616161">TERMINAL</div>
<div class="t" style="left:675px;top:868.5px;font-size:10.1px;color:#616161">PORTS</div>
<div class="t" style="left:732px;top:868.5px;font-size:10.1px;color:#616161">JUPYTER</div>
<div class="a" style="left:422px;top:884px;width:45px;height:1.5px;background:#424242"></div>
<div class="a" style="left:1507.5px;top:864px;width:158px;height:18px;border:1px solid #cecece;border-radius:3px;background:#fff"></div>
<div class="t" style="left:1516px;top:868px;font-size:11px;color:#333">SAS Log</div>
<svg style="left:0;top:0" width="1800" height="1011"><g fill="none" stroke="#424242" stroke-width="1.1"><path d="M1648.5 871l4 4 4-4"/><path d="M1674.5 868.5h12M1674.5 871.5h12M1674.5 874.5h12M1674.5 877.5h8M1683.5 875l3 3M1686.5 875l-3 3"/><rect x="1699.5" y="872.5" width="11" height="7" rx="1"/><path d="M1701.5 872.5v-2a3.5 3.5 0 0 1 7 0v2"/><path d="M1728 869h-2.5v10.5h9.5v-9l-2-2h-5" stroke="#aaa"/><path d="M1748.5 875l4.5-4.5 4.5 4.5M1773.5 868.5l8 8M1781.5 868.5l-8 8"/></g></svg>
<div class="a" style="left:326px;top:888px;width:1474px;height:1px;background:#f0f0f0"></div>
<div class="a" style="left:1787px;top:889px;width:1px;height:102px;background:#e0e0e0"></div>
<div class="a" style="left:326px;top:889px;width:1460px;height:102px;overflow:hidden">
<div class="t mono" style="left:19px;top:-2.20px;font-size:11.27px;color:#222">187</div>
<div class="t mono" style="left:52px;top:-2.20px;font-size:11.27px;color:#222">/<span class="ast">******************************************************************************</span></div>
<div class="t mono" style="left:19px;top:14.65px;font-size:11.27px;color:#222">188</div>
<div class="t mono" style="left:19px;top:31.50px;font-size:11.27px;color:#222">189</div>
<div class="t mono" style="left:52px;top:31.50px;font-size:11.27px;color:#222"> We can use the SGPLOT procedure to visualize the data created in this Data Step.</div>
<div class="t mono" style="left:19px;top:48.35px;font-size:11.27px;color:#222">190</div>
<div class="t mono" style="left:19px;top:65.20px;font-size:11.27px;color:#222">191</div>
<div class="t mono" style="left:52px;top:65.20px;font-size:11.27px;color:#222"> <span class="ast">******************************************************************************</span>/</div>
<div class="t mono" style="left:19px;top:82.05px;font-size:11.27px;color:#222">192</div>
<div class="t mono" style="left:19px;top:98.90px;font-size:11.27px;color:#222">193</div>
<div class="t mono" style="left:52px;top:98.90px;font-size:11.27px;color:#222">title2 &#x27;Use DO LOOP to create single data&#x27;;</div>
</div>
<div class="a" style="left:0;top:991px;width:1800px;height:20px;background:#0461c0;border-top:1px solid #0a4aa8"></div>
<div class="a" style="left:0;top:991px;width:31px;height:20px;background:#1d6e42"></div>
<svg style="left:0;top:0" width="1800" height="1011"><g fill="none" stroke="#fff" stroke-width="1.1"><path d="M12 998.5l2.5 2.5-2.5 2.5M19.5 996l-2.5 2.5 2.5 2.5" stroke="#d8efd8"/><circle cx="45.8" cy="1001.3" r="5.5"/><path d="M43.6 999.1l4.4 4.4M48 999.1l-4.4 4.4"/><path d="M72.3 995.8l-5.3 9.7h10.6z"/><path d="M72.3 999.3v3M72.3 1003.6v.4"/><path d="M109.5 1006l1.8-6.5 1.8 6.5M111.3 999.5v-.3M108 997a4 4 0 0 0 0 5M114.6 997a4 4 0 0 1 0 5M106.5 995.5a6.5 6.5 0 0 0 0 8M116 995.5a6.5 6.5 0 0 1 0 8" stroke-width="1"/><path d="M151 1005.5h-7.5v-9h11.5v4.5"/><circle cx="152.5" cy="1004.5" r="3" fill="#fff" stroke="none"/><path d="M151 1004.5l1.2 1.2 2-2" stroke="#0461c0" stroke-width="1"/><path d="M1774.5 1005h9M1776 1005v-4.5a3 3 0 0 1 6 0v4.5M1778 1006.5h2"/></g></svg>
<div class="t" style="left:56px;top:995.5px;font-size:12px;color:#fff;-webkit-text-stroke:0.35px #fff">0</div>
<div class="t" style="left:82.5px;top:995.5px;font-size:12px;color:#fff;-webkit-text-stroke:0.35px #fff">0</div>
<div class="t" style="left:120.5px;top:995.5px;font-size:12px;color:#fff;-webkit-text-stroke:0.35px #fff">0</div>
<div class="t" style="left:159px;top:995.5px;font-size:12px;color:#fff;-webkit-text-stroke:0.35px #fff">Workbench</div>
<div class="t" style="left:1617px;top:995.5px;font-size:12px;color:#fff;-webkit-text-stroke:0.35px #fff">Cell 1 of 22</div>
<div class="t" style="left:1694px;top:995.5px;font-size:12px;color:#fff;letter-spacing:-0.25px;-webkit-text-stroke:0.35px #fff">Layout: U.S.</div>
<svg style="left:0;top:0" width="1800" height="1011"><g fill="none" stroke-linecap="round"><path d="M611.3 335.8q2.7 0 2.7 2q0-2 2.7-2M614 337.8v10.4M611.3 350.2q2.7 0 2.7-2q0 2 2.7 2" stroke="#fff" stroke-width="2.6"/><path d="M611.3 335.8q2.7 0 2.7 2q0-2 2.7-2M614 337.8v10.4M611.3 350.2q2.7 0 2.7-2q0 2 2.7 2" stroke="#333" stroke-width="1.1"/></g></svg></body></html>
